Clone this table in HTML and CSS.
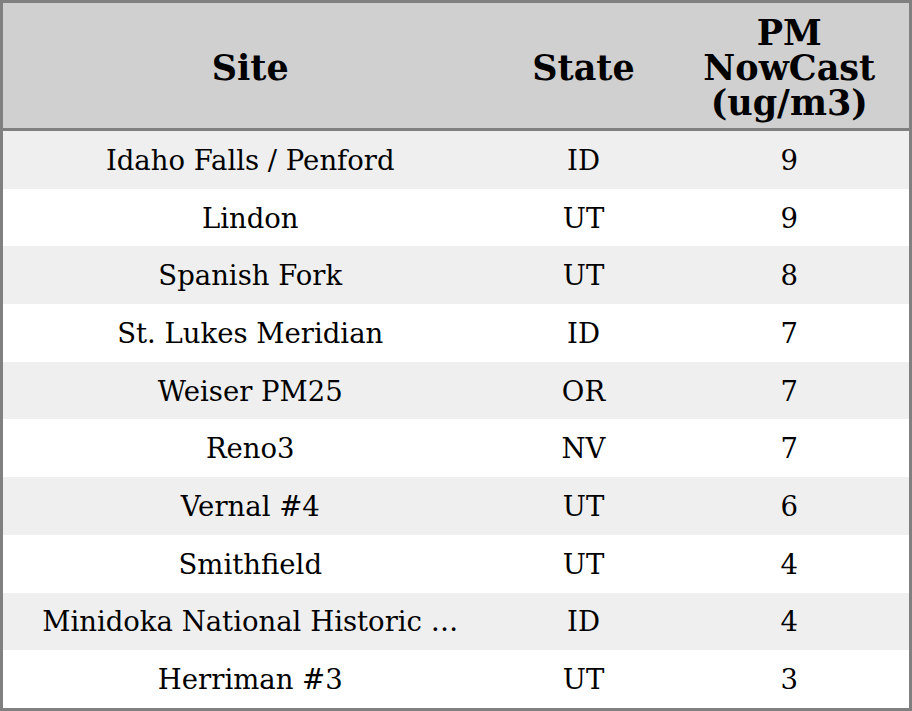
FILE: index.html
```html
<!DOCTYPE html>
<html>
<head>
<meta charset="utf-8">
<link rel="stylesheet" href="styles.css">
</head>
<body>
<table class="data">
  <colgroup>
    <col class="c-site">
    <col class="c-state">
    <col class="c-pm">
  </colgroup>
  <thead>
    <tr><th>Site</th><th>State</th><th>PM<br>NowCast<br>(ug/m3)</th></tr>
  </thead>
  <tbody>
    <tr><td>Idaho Falls / Penford</td><td>ID</td><td>9</td></tr>
    <tr><td>Lindon</td><td>UT</td><td>9</td></tr>
    <tr><td>Spanish Fork</td><td>UT</td><td>8</td></tr>
    <tr><td>St. Lukes Meridian</td><td>ID</td><td>7</td></tr>
    <tr><td>Weiser PM25</td><td>OR</td><td>7</td></tr>
    <tr><td>Reno3</td><td>NV</td><td>7</td></tr>
    <tr><td>Vernal #4</td><td>UT</td><td>6</td></tr>
    <tr><td>Smithfield</td><td>UT</td><td>4</td></tr>
    <tr><td>Minidoka National Historic …</td><td>ID</td><td>4</td></tr>
    <tr><td>Herriman #3</td><td>UT</td><td>3</td></tr>
  </tbody>
</table>
</body>
</html>
```
FILE: styles.css
```css
html, body {
  margin: 0;
  padding: 0;
  background: #ffffff;
}
.data {
  width: 912px;
  height: 711px;
  border-collapse: collapse;
  border: 3px solid #808080;
  font-family: "DejaVu Serif", serif;
  color: #000;
  table-layout: fixed;
}
.c-site { width: 496px; }
.c-state { width: 172px; }
.c-pm { width: auto; }
.data th {
  background: #d0d0d0;
  font-size: 35px;
  font-weight: bold;
  line-height: 35px;
  height: 121px;
  padding: 4px 0 0 0;
  text-align: center;
  vertical-align: middle;
  border-bottom: 3px solid #808080;
}
.data td {
  font-size: 27.5px;
  text-align: center;
  vertical-align: middle;
  padding: 0;
  height: 57px;
}
.data tbody tr:nth-child(odd) td {
  background: #efefef;
}
```
